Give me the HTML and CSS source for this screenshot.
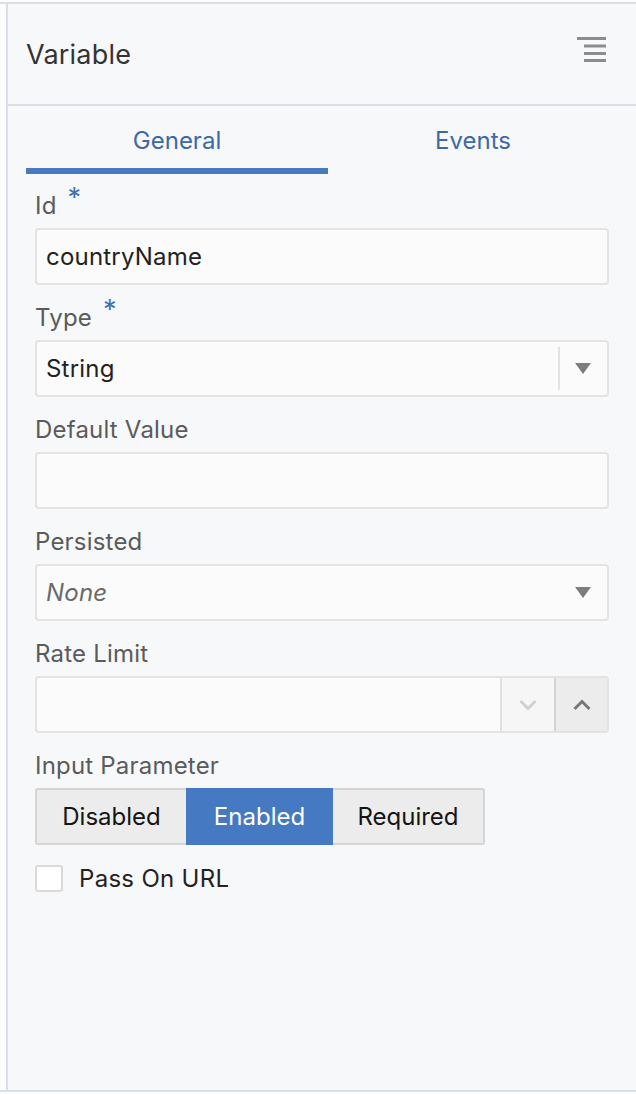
FILE: index.html
```html
<!DOCTYPE html>
<html>
<head>
<meta charset="utf-8">
<link rel="stylesheet" href="styles.css">
</head>
<body>
<div class="frame">
  <div class="panel">
    <div class="header">
      <div class="title">Variable</div>
      <svg class="menu" width="30" height="26" viewBox="0 0 30 26">
        <rect x="0" y="0" width="29" height="3" fill="#8c8c8c"/>
        <rect x="7" y="7.5" width="22" height="3" fill="#8c8c8c"/>
        <rect x="7" y="15" width="22" height="3" fill="#8c8c8c"/>
        <rect x="7" y="22" width="22" height="3" fill="#8c8c8c"/>
      </svg>
    </div>
    <div class="tabs">
      <div class="tab active">General</div>
      <div class="tab">Events</div>
    </div>
    <div class="form">
      <div class="field">
        <div class="label">Id <span class="req">*</span></div>
        <div class="input"><span class="value">countryName</span></div>
      </div>
      <div class="field">
        <div class="label">Type <span class="req">*</span></div>
        <div class="input select">
          <span class="value">String</span>
          <span class="sep"></span>
          <span class="caret"></span>
        </div>
      </div>
      <div class="field">
        <div class="label">Default Value</div>
        <div class="input"></div>
      </div>
      <div class="field">
        <div class="label">Persisted</div>
        <div class="input select">
          <span class="value placeholder">None</span>
          <span class="caret"></span>
        </div>
      </div>
      <div class="field">
        <div class="label">Rate Limit</div>
        <div class="input spin">
          <span class="spin-fill"></span>
          <span class="spin-btn down">
            <svg width="18" height="12" viewBox="0 0 18 12"><path d="M1.5 2 L9 9.5 L16.5 2" fill="none" stroke="#cfcfcf" stroke-width="3"/></svg>
          </span>
          <span class="spin-btn up">
            <svg width="18" height="12" viewBox="0 0 18 12"><path d="M1.5 10 L9 2.5 L16.5 10" fill="none" stroke="#777" stroke-width="3"/></svg>
          </span>
        </div>
      </div>
      <div class="field">
        <div class="label">Input Parameter</div>
        <div class="btn-group">
          <div class="btn first">Disabled</div>
          <div class="btn selected">Enabled</div>
          <div class="btn last">Required</div>
        </div>
      </div>
      <div class="check-row">
        <span class="checkbox"></span>
        <span class="check-label">Pass On URL</span>
      </div>
    </div>
  </div>
</div>
</body>
</html>
```

FILE: styles.css
```css
html, body {
  margin: 0;
  padding: 0;
}
body {
  background: #fcfcfd;
  padding-top: 2px;
  font-family: "Inter", "Roboto", "Liberation Sans", sans-serif;
}
.frame {
  border-top: 2px solid #d9dfe6;
  border-bottom: 2px solid #d9dfe6;
  padding-left: 6px;
  height: 1086px;
  display: flex;
}
.panel {
  flex: 1;
  border-left: 2px solid #d9dfe6;
  background: #f7f8fa;
  display: flex;
  flex-direction: column;
}
.header {
  height: 100px;
  flex: 0 0 100px;
  border-bottom: 2px solid #d9dfe6;
  display: flex;
  align-items: center;
  justify-content: space-between;
  padding: 0 29px 0 18px;
}
.title {
  font-size: 27px;
  color: #333;
  letter-spacing: 0.2px;
}
.menu {
  margin-top: -8px;
}
.tabs {
  display: flex;
  margin: 0 18px;
}
.tab {
  flex: 1;
  text-align: center;
  font-size: 24px;
  line-height: 30px;
  color: #3d69a6;
  padding: 20px 0 12px;
  border-bottom: 6px solid transparent;
}
.tab.active {
  flex: 0 0 302px;
  border-bottom-color: #4679bf;
}
.form {
  padding: 0 27px;
}
.field {
  margin-top: 17px;
}
.field:first-child {
  margin-top: 16px;
}
.label {
  font-size: 24px;
  line-height: 32px;
  height: 32px;
  color: #5b5b5b;
  margin-bottom: 6px;
  letter-spacing: 0.2px;
}
.req {
  color: #3f70b8;
  font-size: 27px;
  line-height: 0;
  margin-left: 4px;
  vertical-align: 7px;
}
.input {
  height: 53px;
  border: 2px solid #e3e3e3;
  border-radius: 4px;
  background: #fbfbfb;
  display: flex;
  align-items: center;
  padding-left: 9px;
  overflow: hidden;
}
.value {
  font-size: 24px;
  color: #222;
  flex: 1;
  letter-spacing: 0.2px;
}
.placeholder {
  font-style: italic;
  color: #6a6a6a;
}
.select .sep {
  width: 2px;
  align-self: stretch;
  margin: 5px 0;
  background: #e3e3e3;
}
.select .caret {
  width: 0;
  height: 0;
  border-left: 8px solid transparent;
  border-right: 8px solid transparent;
  border-top: 11px solid #7d7d7d;
  margin: 0 16px 0 15px;
}
.spin {
  padding-left: 0;
  align-items: stretch;
}
.spin-fill {
  flex: 1;
}
.spin-btn {
  display: flex;
  align-items: center;
  justify-content: center;
  border-left: 2px solid #e0e0e0;
}
.spin-btn.down {
  width: 52px;
  background: #f6f6f6;
}
.spin-btn.up {
  width: 51px;
  background: #ececec;
  border-left-color: #d4d4d4;
}
.btn-group {
  display: flex;
}
.btn {
  height: 53px;
  display: flex;
  align-items: center;
  justify-content: center;
  font-size: 24px;
  color: #141414;
  background: #ececec;
  border: 2px solid #d5d5d5;
}
.btn.first {
  width: 149px;
  border-radius: 3px 0 0 3px;
  border-right: none;
}
.btn.selected {
  width: 143px;
  background: #4579c1;
  border-color: #4579c1;
  color: #fff;
}
.btn.last {
  width: 150px;
  border-left: none;
  border-radius: 0 3px 3px 0;
}
.check-row {
  display: flex;
  align-items: center;
  margin-top: 19px;
}
.checkbox {
  width: 24px;
  height: 23px;
  border: 2px solid #dadada;
  border-radius: 3px;
  background: #fff;
}
.check-label {
  font-size: 24px;
  color: #222;
  margin-left: 16px;
  letter-spacing: 0.3px;
}
```
